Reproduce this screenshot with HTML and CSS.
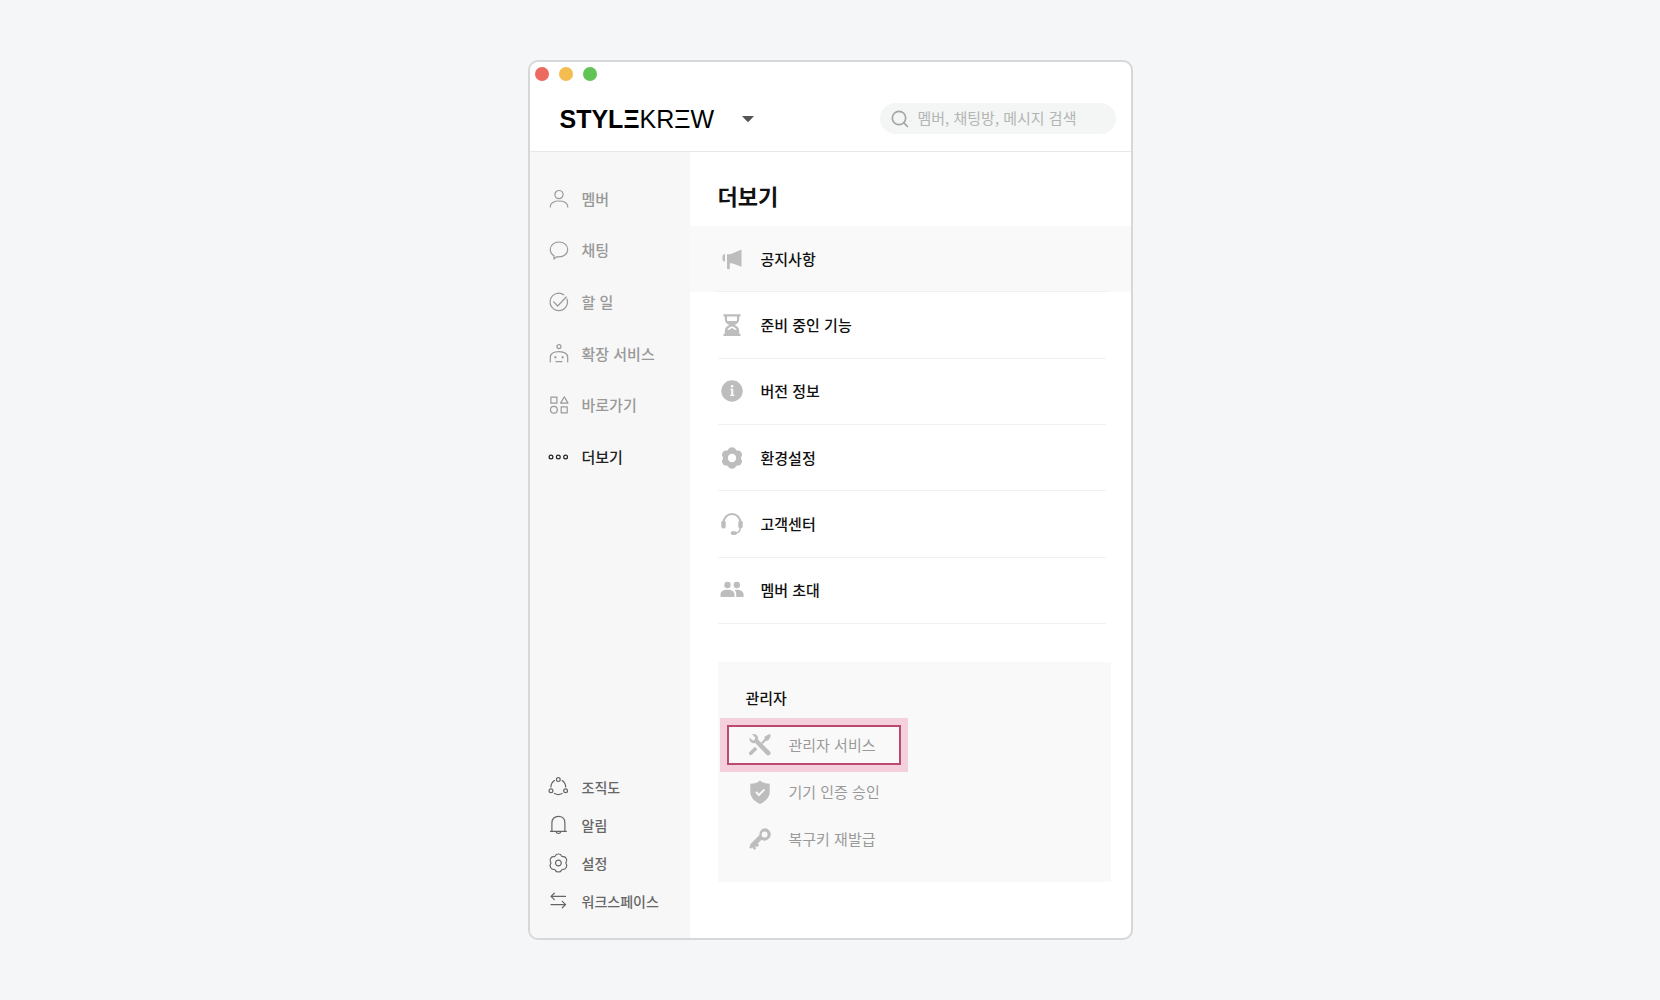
FILE: index.html
```html
<!DOCTYPE html>
<html lang="ko">
<head>
  <meta charset="UTF-8">
  <meta name="viewport" content="width=device-width, initial-scale=1">
  <title>더보기</title>
  <link rel="stylesheet" href="styles.css">
</head>
<body>
  <div class="window">
    <header class="top">
      <div class="lights">
        <span class="light red"></span>
        <span class="light yellow"></span>
        <span class="light green"></span>
      </div>
      <div class="top-row">
        <button class="brand" type="button">
          <span class="logo"><b>STYLΞ</b>KRΞW</span>
          <svg class="caret" width="12" height="6" viewBox="0 0 12 6"><path d="M1 0h10q1 0 .4.8L6.8 5.5q-.8.8-1.6 0L.6.8Q0 0 1 0z" fill="#555"/></svg>
        </button>
        <label class="search">
          <svg width="18" height="18" viewBox="0 0 18 18" fill="none" stroke="#a3a6a5" stroke-width="1.7" stroke-linecap="round"><circle cx="8" cy="8" r="6.7"/><path d="M12.9 12.9l3.6 3.6"/></svg>
          <input type="text" placeholder="멤버, 채팅방, 메시지 검색" aria-label="검색">
        </label>
      </div>
    </header>

    <div class="body">
      <nav class="side">
        <div class="side-main">
          <a href="#member"><svg viewBox="0 0 22 22"><circle cx="11" cy="6.6" r="4.1"/><path d="M2.3 19v-.8c0-3.2 3.6-5.2 8.7-5.2s8.7 2 8.7 5.2v.8"/></svg>멤버</a>
          <a href="#chat"><svg viewBox="0 0 22 22"><path d="M6 20v-3.3C3.600 15.200 2.300 13 2.300 10.500c0-4.300 3.800-7.500 8.700-7.500s8.700 3.200 8.700 7.500-3.800 7.400-8.700 7.400c-.9 0-1.500-.1-2.200-.3z"/></svg>채팅</a>
          <a href="#todo"><svg viewBox="0 0 22 22"><path d="M15.800 3.800A8.700 8.700 0 1 0 19 8"/><path d="M5.700 10.800l4 4.200 8.500-9"/></svg>할 일</a>
          <a href="#apps"><svg viewBox="0 0 22 22"><circle cx="11" cy="3.600" r="2"/><path d="M2.300 19v-4.400c0-3.600 2.800-6 8.700-6s8.700 2.400 8.700 6V19M8 18.600h6"/><path d="M7.400 14v.4M14.600 14v.4" stroke-width="2"/></svg>확장 서비스</a>
          <a href="#links"><svg viewBox="0 0 22 22"><path d="M2.900 3.100h6v6h-6zM13.200 12.800h6v6h-6zM16.300 2.800l3.700 6.300h-7.400z"/><circle cx="5.900" cy="15.800" r="3.400"/></svg>바로가기</a>
          <a href="#more" class="on"><svg viewBox="0 0 22 22"><circle cx="3" cy="11" r="1.900"/><circle cx="10.300" cy="11" r="1.900"/><circle cx="17.600" cy="11" r="1.900"/></svg>더보기</a>
        </div>
        <div class="side-sub">
          <a href="#org"><svg viewBox="0 0 22 22"><circle cx="10.300" cy="3.600" r="1.900"/><circle cx="3" cy="14.700" r="1.900"/><circle cx="17.600" cy="14.700" r="1.900"/><path d="M6.500 4.600c-2.100 1.400-3.500 3.700-3.600 6.300M14.100 4.600c2.100 1.400 3.500 3.700 3.600 6.300M6.500 17.500c2.300 1.300 5.300 1.300 7.600 0"/></svg>조직도</a>
          <a href="#alarm"><svg viewBox="0 0 22 22"><path d="M2.500 17.400h15.800M3.900 17.200V8.800c0-4 2.800-6.500 6.500-6.500s6.500 2.500 6.500 6.500v8.400M8 17.700c.3 1.200 1.200 1.800 2.400 1.800s2.100-.6 2.400-1.800"/></svg>알림</a>
          <a href="#config"><svg viewBox="0 0 22 22"><g transform="translate(10.400 11)"><circle r="2.900"/><path d="M0-9Q2.400-9 2.900-7.500 3.500-6 5-6.300 6.600-6.600 7.800-4.500 9-2.400 7.900-1.200 6.900 0 7.900 1.200 9 2.400 7.800 4.500 6.600 6.600 5 6.300 3.500 6 2.900 7.500 2.400 9 0 9-2.400 9-2.900 7.500-3.500 6-5 6.300-6.600 6.600-7.800 4.500-9 2.400-7.900 1.200-6.900 0-7.900-1.200-9-2.400-7.800-4.500-6.600-6.600-5-6.300-3.500-6-2.900-7.500-2.400-9 0-9z"/></g></svg>설정</a>
          <a href="#workspace"><svg viewBox="0 0 22 22"><path d="M17.500 6.400h-14M6.300 3.200L3 6.400l3.300 3.200M3 14.600h14M14.300 11.400l3.300 3.200-3.300 3.200"/></svg>워크스페이스</a>
        </div>
      </nav>

      <main class="content">
        <h1>더보기</h1>
        <ul class="menu">
          <li class="active"><a href="#notice"><svg viewBox="0 0 24 24"><path d="M21.500 2.500v17.200L12 16.200H9.800v5.100q0 1-1 1h-.8q-1 0-1-1V7.200h3.500zM5 7.300v7.200H4.200q-1.700-.2-1.700-2V9.300q0-1.800 1.700-2z"/></svg>공지사항</a></li>
          <li><a href="#coming"><svg viewBox="0 0 24 24"><path fill-rule="evenodd" d="M3.500 1.200h17v2.200h-1.300v2.800c0 2.800-1.800 4.500-4.600 5.800 2.800 1.300 4.600 3 4.600 5.800v2.900h1.300v2.200h-17v-2.200h1.300v-2.900c0-2.800 1.800-4.500 4.600-5.800-2.800-1.300-4.600-3-4.600-5.800V3.400H3.500zM7 3.400v3.200q0 .8.500 1.500h9q.5-.7.500-1.500V3.400zM12 13.200c-2.300.9-4 2-4.700 3.500h2.200L12 14.800l2.500 1.900h2.200c-.7-1.500-2.400-2.600-4.700-3.500z"/></svg>준비 중인 기능</a></li>
          <li><a href="#version"><svg viewBox="0 0 24 24"><circle cx="12" cy="12" r="10.700"/><path d="M10.500 9.800h2.700v5.900h1.100V17h-4v-1.300h1v-4.600h-.8z" fill="#fff"/><circle cx="12.100" cy="7.200" r="1.300" fill="#fff"/></svg>버전 정보</a></li>
          <li><a href="#settings"><svg viewBox="0 0 24 24"><g transform="translate(12 12)"><path transform="scale(1.200)" d="M0-9Q2.400-9 2.900-7.500 3.500-6 5-6.300 6.600-6.600 7.800-4.500 9-2.400 7.900-1.200 6.900 0 7.900 1.200 9 2.400 7.800 4.500 6.600 6.600 5 6.300 3.500 6 2.900 7.500 2.400 9 0 9-2.400 9-2.900 7.500-3.500 6-5 6.300-6.600 6.600-7.800 4.500-9 2.400-7.900 1.200-6.900 0-7.900-1.200-9-2.400-7.800-4.500-6.600-6.600-5-6.300-3.500-6-2.900-7.500-2.400-9 0-9z"/><circle r="4.200" fill="#fff"/></g></svg>환경설정</a></li>
          <li><a href="#help"><svg viewBox="0 0 24 24"><path d="M3.700 10.500C3.700 5.600 7.200 2.100 12 2.100s8.300 3.500 8.300 8.400" fill="none" stroke="#bdbdbd" stroke-width="2"/><path d="M20.300 15c0 4-1.800 5.900-5 6.300" fill="none" stroke="#bdbdbd" stroke-width="1.500"/><rect x="1.300" y="8.500" width="4.400" height="8" rx="2"/><rect x="18.300" y="8.500" width="4.400" height="8" rx="2"/><rect x="10.600" y="19.200" width="6.400" height="3.700" rx="1.800"/></svg>고객센터</a></li>
          <li><a href="#invite"><svg viewBox="0 0 24 24"><circle cx="7.500" cy="7" r="3.200"/><circle cx="16.800" cy="7" r="3.200"/><path d="M.5 19v-2.500c0-3 2.500-4.700 7-4.700s7 1.700 7 4.700V19zM14.600 11.800c5.700-.5 9 1.300 9 4.700V19h-7.400v-2.500c0-2-.5-3.500-1.600-4.700z"/></svg>멤버 초대</a></li>
        </ul>

        <section class="admin">
          <h2>관리자</h2>
          <a href="#admin-service" class="mark"><svg viewBox="0 0 24 24"><path d="M4.200 1.200c3.400-.9 6.600 1.400 5.900 5.600L22 18.500q1.300 1.700 0 3.300-1.800 1.500-3.500 0L7.300 10.100C4 11 1 8.700 1.500 4.500l3.200 3q2.600-.3 2.600-2.800zM9.400 16.300l-5.300 5.300q-1.400 1.200-2.600 0-1.200-1.300 0-2.600l5.300-5.300zM13.300 9.300l3-3.100.3-2.500L20.200 1.500 22.700 1.200l-.4 3.400-2.200 3-2.400.3-2.900 3z"/></svg>관리자 서비스</a>
          <a href="#device"><svg viewBox="0 0 24 24"><path d="M12 .5q3.500 3.300 9.700 3.300v8c0 6-4.500 9.700-9.700 12.200-5.200-2.500-9.700-6.200-9.700-12.200v-8Q8.500 3.800 12 .5z"/><path d="M8 12l3 3 5.400-5.500" fill="none" stroke="#f9f9f9" stroke-width="2"/></svg>기기 인증 승인</a>
          <a href="#key"><svg viewBox="0 0 24 24"><path fill-rule="evenodd" d="M16.600 1.200a6.200 6.200 0 1 1-3.100 11.600l-3.700 3.700 1.400 1.400-2.400 2.400-1.100-1-.7.700 1.200 1.200-1.700 1.700-2.300-2.300-1.600 1.200-1.200-1.200 1.300-3.800 8.800-8.700A6.200 6.200 0 0 1 16.600 1.200zm0 3.200a3 3 0 1 0 0 6 3 3 0 0 0 0-6z"/></svg>복구키 재발급</a>
        </section>
      </main>
    </div>
  </div>
</body>
</html>
```
FILE: styles.css
```css
* {
  margin: 0;
  padding: 0;
  box-sizing: border-box;
}

body {
  min-height: 100vh;
  display: flex;
  justify-content: center;
  align-items: center;
  background: #f5f6f8;
  font-family: "Noto Sans CJK KR", sans-serif;
  font-size: 15px;
  line-height: 24px;
  color: #111;
}

a {
  color: inherit;
  text-decoration: none;
}

ul {
  list-style: none;
}

.window {
  width: 100%;
  max-width: 605px;
  display: flex;
  flex-direction: column;
  background: #fff;
  border: 2px solid #d6d7d7;
  border-radius: 10px;
  overflow: hidden;
}

/* header */
.top {
  padding-bottom: 16px;
  border-bottom: 1px solid #e8e8e8;
}

.lights {
  display: flex;
  gap: 10px;
  padding: 5px;
}

.light {
  width: 14px;
  height: 14px;
  border-radius: 50%;
}

.red { background: #ec6a5e; }
.yellow { background: #f4bd50; }
.green { background: #61c454; }

.top-row {
  display: flex;
  justify-content: space-between;
  align-items: center;
  padding: 16px 15px 0 30px;
}

.brand {
  display: flex;
  align-items: center;
  gap: 28px;
  padding-top: 1px;
  border: 0;
  background: none;
  cursor: pointer;
}

.logo {
  font: 25px/32px "Liberation Sans", Arial, sans-serif;
  color: #000;
}

.search {
  width: 236px;
  height: 31px;
  display: flex;
  align-items: center;
  gap: 9px;
  padding: 0 11px;
  border-radius: 16px;
  background: #f4f6f5;
}

.search svg {
  flex: none;
}

.search input {
  flex: 1;
  min-width: 0;
  padding-bottom: 2px;
  border: 0;
  outline: 0;
  background: none;
  font: inherit;
}

.search input::placeholder {
  color: #b3b5b4;
}

.body {
  flex: 1;
  display: flex;
}

/* left menu */
.side {
  flex: none;
  width: 160px;
  display: flex;
  flex-direction: column;
  justify-content: space-between;
  padding: 21px 0 18px;
  background: #f7f7f7;
}

.side-main {
  display: grid;
  height: 310px;
  font-weight: 500;
  color: #999;
}

.side a {
  display: flex;
  align-items: center;
  gap: 12px;
  padding-left: 18px;
}

.side svg {
  width: 22px;
  height: 22px;
  fill: none;
  stroke: currentColor;
  stroke-width: 1.2;
  stroke-linecap: round;
  stroke-linejoin: round;
}

.side .on {
  color: #222;
}

.side-sub {
  font-size: 14px;
  font-weight: 500;
  color: #666;
}

.side-sub a {
  height: 38px;
}

/* content */
.content {
  flex: 1;
  padding-bottom: 56px;
}

h1 {
  padding: 28px 28px 16px;
  font-size: 22px;
  line-height: 30px;
}

.menu {
  display: grid;
  height: 398px;
}

.menu li {
  display: grid;
  padding: 0 25px 0 28px;
}

.menu .active {
  background: #f9f9f9;
}

.menu a {
  display: flex;
  align-items: center;
  gap: 17px;
  padding-left: 2px;
  border-bottom: 1px solid #f0f0f0;
  font-weight: 500;
}

.menu svg,
.admin svg {
  width: 24px;
  height: 24px;
  fill: #bdbdbd;
}

.admin {
  display: flex;
  flex-direction: column;
  align-items: flex-start;
  gap: 7px;
  margin: 38px 20px 0 28px;
  padding: 24px 9px 23px;
  background: #f9f9f9;
}

.admin h2 {
  margin-bottom: 8px;
  padding-left: 19px;
  font-size: 15px;
  font-weight: 500;
}

.admin a {
  height: 40px;
  display: flex;
  align-items: center;
  gap: 17px;
  padding: 0 23px 0 19px;
  border: 2px solid transparent;
  color: #999;
}

.admin .mark {
  border-color: #bc4a6e;
  box-shadow: 0 0 0 7px #f4d0dc;
}
```
